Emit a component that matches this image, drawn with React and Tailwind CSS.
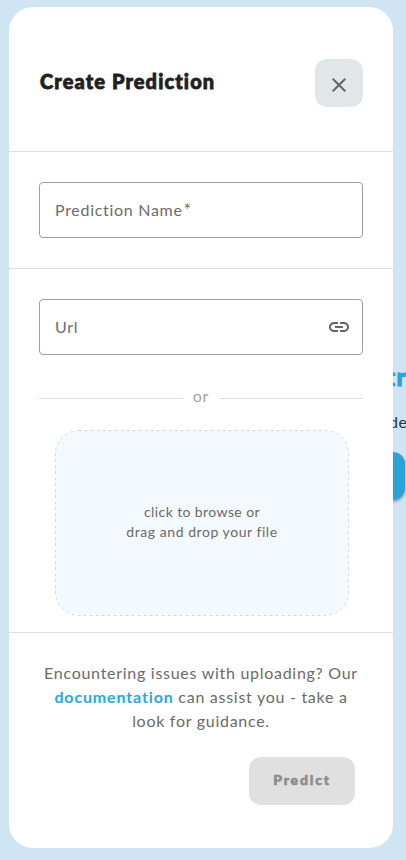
import React from 'react';

function Backdrop() {
  return (
    <div className="absolute inset-y-0 right-0 w-[13px] overflow-hidden" aria-hidden="true">
      <span className="absolute left-[-7px] top-[361px] text-[24px] leading-8 font-black tracking-[1.5px] text-[#27a3dd] [-webkit-text-stroke:1px_#27a3dd]">tr</span>
      <span className="absolute left-[-4px] top-[410px] text-[16px] leading-6 tracking-[0.5px] text-[#26364a]">de</span>
      <div className="absolute left-[-60px] top-[452px] h-12 w-[72px] rounded-xl bg-[#27a3dd] shadow-[0_2px_3px_rgba(0,0,0,0.3)]" />
    </div>
  );
}

function Field({ label, mark, children }) {
  return (
    <div className="flex h-14 items-center justify-between rounded border border-[#9e9e9e] pl-[15px] pr-[11px]">
      <span className="text-[16px] leading-6 tracking-[0.7px] text-[#6c6c6c]">
        {label}
        {mark && <span className="ml-px text-[18px] leading-4">{mark}</span>}
      </span>
      {children}
    </div>
  );
}

export default function App() {
  return (
    <div className="relative h-[860px] w-[406px] overflow-hidden bg-[#cfe5f3] px-[9px] pt-[7px] font-['Lato','Liberation_Sans',sans-serif]">
      <Backdrop />
      <main className="relative flex h-[841px] w-[384px] flex-col rounded-3xl bg-white">
        <header className="flex h-[145px] shrink-0 items-start justify-between border-b border-[#e0e0e0] px-[30px] pt-[52px]">
          <h1 className="pt-[6px] pl-px text-[20px] leading-8 font-black tracking-[1.1px] text-[#212121] [-webkit-text-stroke:0.8px_#212121]">Create Prediction</h1>
          <button aria-label="Close" className="flex h-12 w-12 items-center justify-center rounded-xl bg-[#e1e7e9] pt-1">
            <svg className="h-6 w-6 fill-[#666]" viewBox="0 0 24 24">
              <path d="M19 6.41 17.59 5 12 10.59 6.41 5 5 6.41 10.59 12 5 17.59 6.41 19 12 13.41 17.59 19 19 17.59 13.41 12z" />
            </svg>
          </button>
        </header>
        <section className="h-[117px] shrink-0 border-b border-[#e0e0e0] px-[30px] pt-[30px]">
          <Field label="Prediction Name" mark="*" />
        </section>
        <section className="h-[364px] shrink-0 border-b border-[#e0e0e0] px-[30px] pt-[30px]">
          <Field label="Url">
            <svg className="h-6 w-6 fill-[#666]" viewBox="0 0 24 24">
              <path d="M3.9 12c0-1.71 1.39-3.1 3.1-3.1h4V7H7c-2.76 0-5 2.24-5 5s2.24 5 5 5h4v-1.900H7c-1.710 0-3.100-1.390-3.100-3.100zM8 13h8v-2H8v2zm9-6h-4v1.900h4c1.710 0 3.100 1.390 3.100 3.100s-1.390 3.100-3.100 3.100h-4V17h4c2.760 0 5-2.240 5-5s-2.240-5-5-5z" />
            </svg>
          </Field>
          <div className="mt-[30px] flex h-6 items-center">
            <span className="mt-[3px] h-px flex-1 bg-[#e0e0e0]" />
            <span className="w-9 pb-[2px] text-center text-[16px] leading-6 tracking-[0.7px] text-[#a3a3a3]">or</span>
            <span className="mt-[3px] h-px flex-1 bg-[#e0e0e0]" />
          </div>
          <div className="relative ml-4 mt-[21px] flex h-[186px] w-[294px] items-center justify-center rounded-3xl bg-[#f3f9fd] pb-[2px] text-center text-[14px] leading-5 text-[#6a6a6a]">
            <svg className="absolute inset-0 h-full w-full" viewBox="0 0 294 186" fill="none">
              <rect x="0.5" y="0.5" width="293" height="185" rx="23.5" stroke="#d3d6d8" strokeDasharray="2.500 3.500" />
            </svg>
            <p>
              <span className="tracking-[0.4px]">click to browse or</span>
              <br />
              <span className="tracking-[0.55px]">drag and drop your file</span>
            </p>
          </div>
        </section>
        <footer className="flex flex-col px-[30px] pt-[28px]">
          <p className="text-center text-[16px] leading-6 tracking-[0.72px] text-[#6a6a6a]">
            Encountering issues with uploading? Our<br />
            <a className="font-bold tracking-[0.85px] text-[#27a9e1]">documentation</a> can assist you - take a<br />
            look for guidance.
          </p>
          <button className="mr-2 mt-[24px] h-12 w-[106px] self-end rounded-xl bg-[#e0e0e0] pb-[3px] text-[14px] font-black tracking-[1.8px] text-[#8c8c8c] [-webkit-text-stroke:0.6px_#8c8c8c]">Predict</button>
        </footer>
      </main>
    </div>
  );
}
